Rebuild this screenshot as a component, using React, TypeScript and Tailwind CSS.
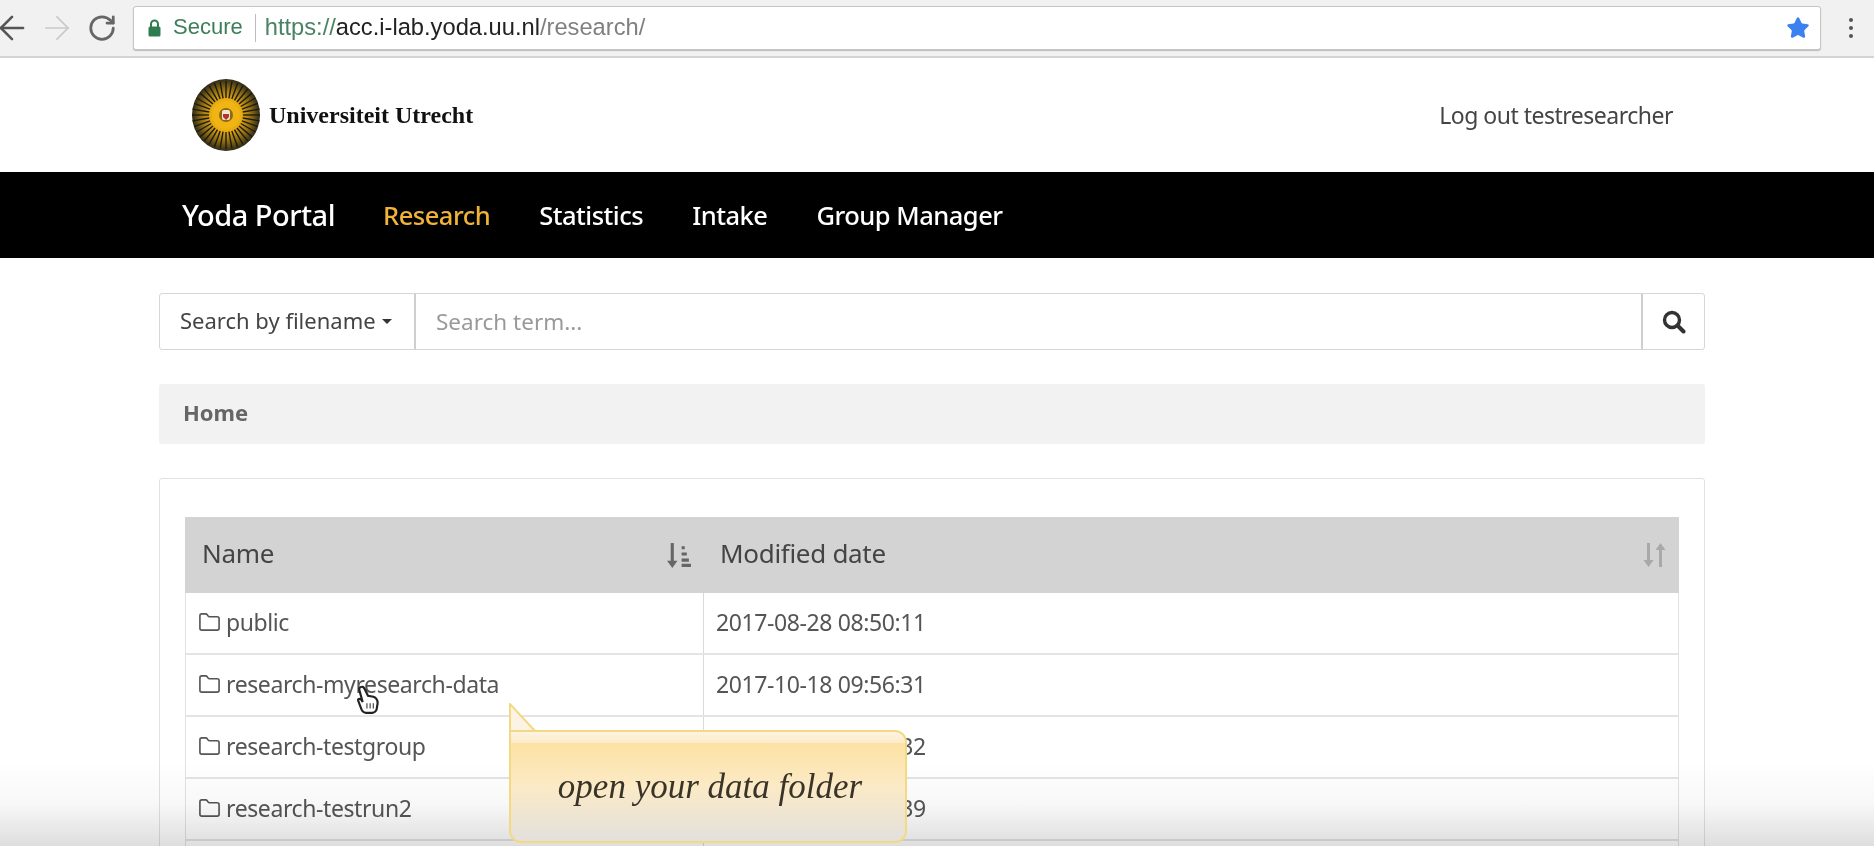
import { ArrowLeft, ArrowRight, RotateCw, Star, Folder } from 'lucide-react'

const ROWS = [
  { name: 'public', date: '2017-08-28 08:50:11' },
  { name: 'research-myresearch-data', date: '2017-10-18 09:56:31' },
  { name: 'research-testgroup', date: '2017-10-18 09:56:32' },
  { name: 'research-testrun2', date: '2017-10-18 09:56:39' },
]

const RAYS = Array.from({ length: 36 }, (_, i) => i * 10)

function UuLogo() {
  return (
    <svg width="68" height="72" viewBox="0 0 68 72">
      <defs>
        <radialGradient id="sun">
          <stop offset="0%" stopColor="#f7c61a" />
          <stop offset="45%" stopColor="#e9ac10" />
          <stop offset="75%" stopColor="#8a6a12" />
          <stop offset="100%" stopColor="#2e2a18" />
        </radialGradient>
      </defs>
      <ellipse cx="34" cy="36" rx="34" ry="36" fill="url(#sun)" />
      {RAYS.map(a => (
        <line key={a} x1="34" y1="19" x2="34" y2="2" stroke="#1d1a10" strokeWidth="1.4" transform={`rotate(${a} 34 36)`} />
      ))}
      <circle cx="34" cy="36" r="14" fill="#f0b414" />
      <circle cx="34" cy="36" r="7" fill="#8c6a14" />
      <rect x="30" y="31" width="8" height="10" rx="2" fill="#f3e4d0" />
      <path d="M31 35h6v3l-3 3-3-3z" fill="#b3362b" />
    </svg>
  )
}

function PadLock() {
  return (
    <svg width="13" height="18" viewBox="0 0 13 18" className="ml-[14px] shrink-0">
      <path d="M3 8V5a3.500 3.500 0 0 1 7 0v3" fill="none" stroke="#2f7d4f" strokeWidth="2" />
      <rect x="0.500" y="7.500" width="12" height="10" rx="1.500" fill="#2f7d4f" />
    </svg>
  )
}

function SearchGlyph() {
  return (
    <svg width="24" height="24" viewBox="0 0 24 24" className="text-[#333]">
      <circle cx="10" cy="10" r="7.500" fill="none" stroke="currentColor" strokeWidth="3.400" />
      <path d="M15.500 15.500L21.500 21.500" stroke="currentColor" strokeWidth="4" strokeLinecap="round" />
    </svg>
  )
}

function SortActive() {
  return (
    <svg width="27" height="27" viewBox="0 0 24 26" className="text-[#666]">
      <path d="M6 1v20" stroke="currentColor" strokeWidth="3" />
      <path d="M1 18l5 7 5-7z" fill="currentColor" />
      <path d="M15 4h3v3h-3zM15 10h5v3h-5zM15 16h7v3h-7zM15 21h9v3h-9z" fill="currentColor" />
    </svg>
  )
}

function SortIdle() {
  return (
    <svg width="25" height="26" viewBox="0 0 24 26" className="text-[#a9a9a9]">
      <path d="M6 1v20M18 5v20" stroke="currentColor" strokeWidth="3" />
      <path d="M1 18l5 7 5-7zM13 8l5-7 5 7z" fill="currentColor" />
    </svg>
  )
}

export default function App() {
  return (
    <div className="relative h-[846px] overflow-hidden bg-white blur-[0.5px] font-['Noto_Sans',sans-serif]">
      {/* browser chrome */}
      <div className="h-[58px] bg-[#f1f1f1] border-b-2 border-[#d4d4d4] flex items-center">
        <ArrowLeft size={38} strokeWidth={1.6} className="-ml-[7px] shrink-0 text-[#555]" />
        <ArrowRight size={38} strokeWidth={1.1} className="ml-[7px] shrink-0 text-[#c8c8c8]" />
        <RotateCw size={30} strokeWidth={2.2} className="ml-[11px] shrink-0 text-[#666]" />
        <div className="ml-[16px] h-[44px] w-[1688px] shrink-0 bg-white rounded-[3px] border border-[#c6c6c6] shadow-[0_1px_1px_#bbb] flex items-center font-['Liberation_Sans',sans-serif] text-[23.700px]">
          <PadLock />
          <span className="ml-[12px] -mt-[3px] text-[22px] text-[#3b7f58]">Secure</span>
          <span className="ml-[12px] h-[28px] w-px bg-[#bdbdbd]" />
          <span className="ml-[9px] text-[#4a8264]">https://</span>
          <span className="text-[#222]">acc.i-lab.yoda.uu.nl</span>
          <span className="text-[#808080]">/research/</span>
          <Star size={24} fill="#3b82f0" strokeWidth={1.5} className="ml-auto mr-[10px] text-[#3b82f0]" />
        </div>
        <div className="ml-[28px] flex flex-col gap-[4px]">
          <span className="size-[4px] rounded-full bg-[#555]" />
          <span className="size-[4px] rounded-full bg-[#555]" />
          <span className="size-[4px] rounded-full bg-[#555]" />
        </div>
      </div>

      {/* site header */}
      <div className="h-[114px] flex items-center pl-[192px] pr-[201px]">
        <UuLogo />
        <span className="ml-[9px] font-['Liberation_Serif',serif] font-bold text-[24px] text-[#111]">Universiteit Utrecht</span>
        <span className="ml-auto text-[23px] text-[#444] tracking-[-0.5px]">Log out testresearcher</span>
      </div>

      {/* nav */}
      <div className="h-[86px] bg-black flex items-center pl-[182px] text-white font-medium text-[25.500px] tracking-[-0.5px]">
        <span className="text-[29px]">Yoda Portal</span>
        <span className="ml-[48px] text-[#efb33a]">Research</span>
        <span className="ml-[49px]">Statistics</span>
        <span className="ml-[49px]">Intake</span>
        <span className="ml-[49px]">Group Manager</span>
      </div>

      <div className="ml-[159px] w-[1546px]">
        {/* search */}
        <div className="mt-[35px] h-[57px] flex border border-[#d6d6d6] rounded-[3px]">
          <div className="w-[256px] shrink-0 flex items-center pl-[20px] pb-[2px] border-r-2 border-[#cfcfcf] text-[22px] text-[#444]">
            Search by filename
            <span className="ml-[6px] mt-[2px] border-x-[5px] border-x-transparent border-t-[5px] border-t-[#333]" />
          </div>
          <div className="flex-1 flex items-center pl-[20px] text-[22.500px] text-[#999]">Search term...</div>
          <div className="w-[63px] shrink-0 flex items-center justify-center border-l-2 border-[#cfcfcf]">
            <SearchGlyph />
          </div>
        </div>

        {/* breadcrumb */}
        <div className="mt-[34px] h-[60px] bg-[#f2f2f2] rounded-[3px] flex items-center pl-[24px] pb-[4px] font-bold text-[22px] text-[#666]">Home</div>

        {/* panel */}
        <div className="mt-[34px] border border-[#e2e2e2] rounded-[3px] px-[25px] pt-[38px] h-[500px]">
          <div className="h-[76px] bg-[#d3d3d3] flex text-[26px] text-[#444] tracking-[-0.3px]">
            <div className="w-[519px] shrink-0 flex items-center pl-[17px] pr-[12px] justify-between">
              <span className="-mt-[3px]">Name</span>
              <SortActive />
            </div>
            <div className="flex-1 flex items-center pl-[16px] pr-[12px] justify-between">
              <span className="-mt-[3px]">Modified date</span>
              <SortIdle />
            </div>
          </div>
          <div className="border-x border-[#e2e2e2]">
            {ROWS.map(r => (
              <div key={r.name} className="h-[62px] flex border-b-2 border-[#e4e4e4] text-[23px] text-[#555] tracking-[-0.4px]">
                <div className="w-[518px] shrink-0 flex items-center pl-[12px] pb-[2px] border-r border-[#d9d9d9]">
                  <Folder size={23} strokeWidth={1.7} className="text-[#555]" />
                  <span className="ml-[5px]">{r.name}</span>
                </div>
                <div className="flex-1 flex items-center pl-[12px] pb-[2px]">{r.date}</div>
              </div>
            ))}
            <div className="h-[62px] flex">
              <div className="w-[518px] shrink-0 border-r border-[#d9d9d9]" />
            </div>
          </div>
        </div>
      </div>

      {/* bottom fade of the video frame */}
      <div className="absolute inset-x-0 bottom-0 h-[86px] mix-blend-multiply bg-gradient-to-b from-white via-[#f8f8f8] to-[#dedede]" />

      {/* hand cursor */}
      <svg className="absolute left-[355px] top-[685px]" width="26" height="30" viewBox="0 0 24 28">
        <path d="M5 2c2-1 3 0 4 2l3 6 5 1c3 1 4 3 4 6l-1 6c-1 2-2 3-4 3h-6c-2 0-3-1-4-3L3 15c-1-2 1-3 3-1l1 2L4 5c-.3-1 0-2.500 1-3z" fill="#fff" stroke="#222" strokeWidth="2" />
        <path d="M11 17v5M14 17v5M17 17v5" stroke="#555" strokeWidth="1.200" />
      </svg>

      {/* callout */}
      <div className="absolute left-[509px] top-[703px] w-[398px] h-[140px]">
        <svg className="absolute left-0 top-0" width="30" height="30" viewBox="0 0 30 30">
          <path d="M1 29V1l25 27" fill="#fdf3e4" stroke="#f3d982" strokeWidth="2" />
        </svg>
        <div className="absolute inset-x-0 bottom-0 top-[27px] rounded-b-[12px] rounded-tr-[12px] border-2 border-[#f3d982] overflow-hidden bg-gradient-to-b from-[#fee09a] via-[#fbeac6] to-[#e3e0dc] flex items-center justify-center">
          <div className="absolute inset-x-0 top-0 h-[11px] bg-gradient-to-b from-[#fdf3e2] to-[#fdeccb]" />
          <span className="relative ml-[4px] mt-[2px] font-['Liberation_Serif',serif] italic text-[35px] text-[#3a3428]">open your data folder</span>
        </div>
      </div>
    </div>
  )
}
